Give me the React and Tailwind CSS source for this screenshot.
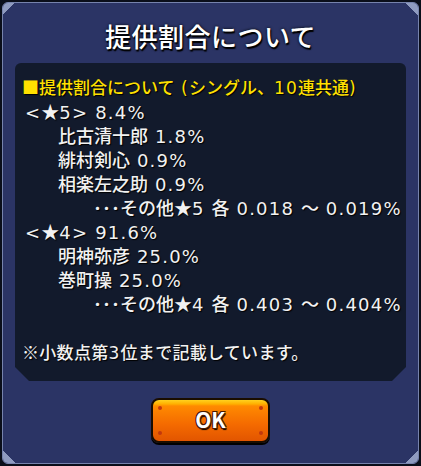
import React from 'react';

const font = { fontFamily: '"Noto Sans CJK JP", "Noto Sans", sans-serif' };
const latinFont = { fontFamily: '"DejaVu Sans", "Noto Sans CJK JP", sans-serif' };

const lines = [
  { text: '<★5> 8.4%', indent: 'pl-[10px]' },
  { text: '比古清十郎 1.8%', indent: 'pl-[43px]' },
  { text: '緋村剣心 0.9%', indent: 'pl-[43px]' },
  { text: '相楽左之助 0.9%', indent: 'pl-[43px]' },
  { text: '･･･その他★5 各 0.018 ～ 0.019%', indent: 'pl-[78px]' },
  { text: '<★4> 91.6%', indent: 'pl-[10px]' },
  { text: '明神弥彦 25.0%', indent: 'pl-[43px]' },
  { text: '巻町操 25.0%', indent: 'pl-[43px]' },
  { text: '･･･その他★4 各 0.403 ～ 0.404%', indent: 'pl-[78px]' },
];

// latin runs get a wider face so digits come out as broad as the game font
const Mixed = ({ text }) =>
  text.split(/([\u3000-\u9fff\uff00-\uffef★■※]+)/).map((part, i) =>
    i % 2 === 1 ? (
      <span key={i}>{part}</span>
    ) : part ? (
      <span key={i} className="tracking-[1.2px]" style={latinFont}>
        {part}
      </span>
    ) : null
  );

const Dot = ({ className }) => (
  <span className={`absolute h-[4px] w-[4px] rounded-full bg-[#c2380c] ${className}`} />
);

export default function App() {
  return (
    <div className="h-[466px] w-[421px] bg-[#0a0e1a] p-[2px]" style={font}>
      <div className="relative flex h-full flex-col rounded-[6px] border border-[#7683ad] bg-[#2b3465]">
        {/* corner bevels */}
        <span className="absolute left-0 top-0 h-[12px] w-[12px] rounded-tl-[5px] bg-[linear-gradient(135deg,#8f9bc0_50%,transparent_50%)]" />
        <span className="absolute right-0 top-0 h-[12px] w-[12px] rounded-tr-[5px] bg-[linear-gradient(225deg,#8f9bc0_50%,transparent_50%)]" />
        <span className="absolute bottom-0 left-0 h-[12px] w-[12px] rounded-bl-[5px] bg-[linear-gradient(45deg,#8f9bc0_50%,transparent_50%)]" />
        <span className="absolute bottom-0 right-0 h-[12px] w-[12px] rounded-br-[5px] bg-[linear-gradient(315deg,#8f9bc0_50%,transparent_50%)]" />

        <div className="flex h-[60px] items-center justify-center pt-[4px]">
          <h1 className="text-[26px] font-medium tracking-[0.5px] text-white [text-shadow:1px_2px_1px_#000,0_0_3px_#000]">
            提供割合について
          </h1>
        </div>

        <div className="mx-[12px] h-[318px] rounded-t-[6px] bg-[#121a2c] pt-[12px] [clip-path:polygon(0_0,100%_0,100%_calc(100%-14px),calc(100%-14px)_100%,14px_100%,0_calc(100%-14px))]">
          <div className="text-[18px] font-medium leading-[24px] text-[#f2f2f2] [text-shadow:1px_1px_1px_#000]">
            <p className="h-[24px] whitespace-nowrap pl-[7px] text-[17px] text-[#ffe000]">
              <Mixed text="■提供割合について (シングル、10連共通)" />
            </p>
            {lines.map((l) => (
              <p key={l.text} className={`${l.indent} h-[24px] whitespace-nowrap`}>
                <Mixed text={l.text} />
              </p>
            ))}
            <p className="mt-[25px] h-[24px] whitespace-nowrap pl-[7px] text-[17px] tracking-[0.3px]">
              <Mixed text="※小数点第3位まで記載しています。" />
            </p>
          </div>
        </div>

        <div className="flex flex-1 items-center justify-center pb-[4px]">
          <button className="relative h-[45px] w-[119px] rounded-[8px] border-2 border-[#1a0d00] bg-[linear-gradient(#ffd21f_0,#ffb000_4px,#ff8a00_6px,#f46a00_60%,#e25500_100%)] shadow-[0_2px_0_#000]">
            <Dot className="left-[5px] top-[6px]" />
            <Dot className="right-[5px] top-[6px]" />
            <Dot className="bottom-[6px] left-[5px]" />
            <Dot className="bottom-[6px] right-[5px]" />
            <span className="text-[21px] font-bold text-white [text-shadow:1px_1px_0_#4a1a00,-1px_-1px_0_#4a1a00,1px_-1px_0_#4a1a00,-1px_1px_0_#4a1a00,1px_2px_1px_#000]">
              OK
            </span>
          </button>
        </div>
      </div>
    </div>
  );
}
